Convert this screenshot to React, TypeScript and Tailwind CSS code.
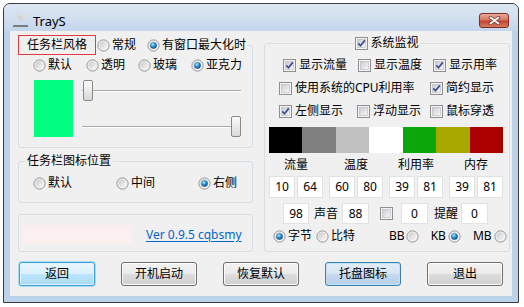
import React, { useId } from "react";

function Radio({ checked = false }: { checked?: boolean }) {
  const id = useId().replace(/[^a-zA-Z0-9]/g, "");
  return (
    <svg width="13" height="13" viewBox="0 0 13 13" className="shrink-0 block">
      <defs>
        <linearGradient id={`ri${id}`} x1="0" y1="0" x2="1" y2="1">
          <stop offset="0" stopColor="#c8c8c8" />
          <stop offset="1" stopColor="#fbfbfb" />
        </linearGradient>
        <radialGradient id={`rd${id}`} cx="0.4" cy="0.35" r="0.7">
          <stop offset="0" stopColor="#b9ecff" />
          <stop offset="0.45" stopColor="#2c92d5" />
          <stop offset="1" stopColor="#0c3f78" />
        </radialGradient>
      </defs>
      <circle cx="6.5" cy="6.5" r="5.6" fill="#f6f6f6" stroke="#929292" strokeWidth="1" />
      <circle cx="6.5" cy="6.5" r="4.2" fill={`url(#ri${id})`} />
      {checked && <circle cx="6.5" cy="6.5" r="3.3" fill={`url(#rd${id})`} />}
    </svg>
  );
}

function Check({ checked = false }: { checked?: boolean }) {
  const id = useId().replace(/[^a-zA-Z0-9]/g, "");
  return (
    <svg width="13" height="13" viewBox="0 0 13 13" className="shrink-0 block">
      <defs>
        <linearGradient id={`cg${id}`} x1="0" y1="0" x2="1" y2="1">
          <stop offset="0" stopColor="#c7cbd1" />
          <stop offset="1" stopColor="#f8f8f8" />
        </linearGradient>
      </defs>
      <rect x="0.5" y="0.5" width="12" height="12" fill="#f4f4f4" stroke="#8f8f8f" />
      <rect x="2.5" y="2.5" width="8" height="8" fill={`url(#cg${id})`} stroke="#b4b8be" strokeWidth="0.6" />
      {checked && (
        <path d="M3.3 6.4 L5.5 8.8 L9.8 3.4" fill="none" stroke="#3d4f94" strokeWidth="1.7" strokeLinejoin="round" />
      )}
    </svg>
  );
}

function RadioItem({ label, checked, className = "" }: { label: string; checked?: boolean; className?: string }) {
  return (
    <div className={"flex items-center " + className}>
      <Radio checked={checked} />
      <span className="ml-[2px]">{label}</span>
    </div>
  );
}

function CheckItem({ label, checked, className = "" }: { label: string; checked?: boolean; className?: string }) {
  return (
    <div className={"flex items-center " + className}>
      <Check checked={checked} />
      <span className="ml-[3px]">{label}</span>
    </div>
  );
}

function Slider({ end = false }: { end?: boolean }) {
  return (
    <div className={"relative h-[21px] flex items-center " + (end ? "justify-end" : "justify-start")}>
      <div className="absolute left-0 right-0 top-[10px] h-[2px] bg-[linear-gradient(#a9a9a9_50%,#ffffff_50%)]" />
      <div className="relative w-[10px] h-[21px] rounded-[2px] border border-[#888888] bg-[linear-gradient(#fbfbfb,#d8d8d8)] ml-[1px]" />
    </div>
  );
}

function Box({ v, className = "w-[26px] h-[22px]" }: { v: string; className?: string }) {
  return (
    <div className={"bg-white border border-[#e2e2e2] flex items-center justify-center " + className}>{v}</div>
  );
}

const btnBase = "w-[76px] h-[24px] rounded-[3px] border flex items-center justify-center";
const btnNormal =
  "border-[#707070] bg-[linear-gradient(#f2f2f2,#ebebeb_50%,#dddddd_50%,#cfcfcf)] shadow-[inset_0_0_0_1px_#fbfbfb]";

export default function App() {
  const swatches = ["bg-[#000000]", "bg-[#808080]", "bg-[#c0c0c0]", "bg-[#ffffff]", "bg-[#0aa60a]", "bg-[#a8a800]", "bg-[#aa0000]"];
  return (
    <div className="w-[524px] h-[307px] bg-white font-['Noto_Sans','Noto_Sans_CJK_SC',sans-serif] text-[12px] leading-[16px] text-black overflow-hidden">
      <div className="ml-[3px] mt-[3px] w-[516px] h-[300px] border border-[#3a3a3a] rounded-t-[7px] flex flex-col bg-[#bcd1ea] overflow-hidden">
        {/* title bar */}
        <div className="h-[27px] shrink-0 flex items-start pt-[9px] pl-[8px] pr-[9px] bg-[linear-gradient(#dee7f2,#c4d6ec)]">
          <svg width="16" height="16" viewBox="0 0 16 16" className="block shrink-0">
            <path d="M5 1 L13 1 L13 8 L9 8 L5 4 Z" fill="#d4d4d4" />
            <path d="M6 2 L12 2 L12 7" fill="none" stroke="#e6e6e6" />
            <rect x="1" y="12" width="15" height="2" fill="#7d7d7d" />
          </svg>
          <span className="ml-[5px] text-[13px] leading-[16px] font-['Noto_Sans',sans-serif]">TrayS</span>
          <div className="ml-auto w-[30px] h-[15px] rounded-[3px] border border-[#7d2e24] bg-[linear-gradient(#eaa99c,#d7775f_45%,#c2452e_55%,#d97a62)] flex items-center justify-center">
            <svg width="13" height="9" viewBox="0 0 13 9" className="block">
              <path d="M2.5 1.5 L10.5 7.5 M10.5 1.5 L2.5 7.5" stroke="#6b2f26" strokeWidth="3.4" strokeLinecap="round" />
              <path d="M2.5 1.5 L10.5 7.5 M10.5 1.5 L2.5 7.5" stroke="#ffffff" strokeWidth="1.9" strokeLinecap="round" />
            </svg>
          </div>
        </div>

        {/* client */}
        <div className="mx-[6px] h-[265px] shrink-0 bg-[#f0f0f0] pt-[4px] pl-[8px]">
          <div className="flex items-start gap-[11px]">
            {/* left column */}
            <div className="w-[235px] flex flex-col">
              <fieldset className="border border-[#d5dfe5] rounded-[3px] pb-[10px]">
                <legend className="-ml-[1px] pr-[1px]">
                  <div className="flex items-center h-[20px]">
                    <div className="h-[20px] w-[78px] border border-[#e23a3e] pl-[8px] flex items-center">任务栏风格</div>
                    <RadioItem className="ml-[1px]" label="常规" />
                    <RadioItem className="ml-[11px]" label="有窗口最大化时" checked />
                  </div>
                </legend>
                <div className="flex items-center mt-[2px] pl-[14px] h-[16px]">
                  <RadioItem className="w-[53px]" label="默认" />
                  <RadioItem className="w-[52px]" label="透明" />
                  <RadioItem className="w-[53px]" label="玻璃" />
                  <RadioItem label="亚克力" checked />
                </div>
                <div className="flex mt-[7px] pl-[15px]">
                  <div className="w-[39px] h-[57px] bg-[#00ff80]" />
                  <div className="ml-[9px] w-[159px] h-[57px] flex flex-col justify-between">
                    <Slider />
                    <Slider end />
                  </div>
                </div>
              </fieldset>

              <fieldset className="mt-[5px] border border-[#d5dfe5] rounded-[3px] pb-[11px]">
                <legend className="ml-[6px] px-[2px] leading-[16px]">任务栏图标位置</legend>
                <div className="flex items-center mt-[6px] pl-[14px] h-[16px]">
                  <RadioItem className="w-[83px]" label="默认" />
                  <RadioItem className="w-[82px]" label="中间" />
                  <RadioItem label="右侧" checked />
                </div>
              </fieldset>

              <div className="mt-[11px] border border-[#d5dfe5] rounded-[3px] pt-[10px] pl-[3px] pb-[7px] flex items-center">
                <div className="w-[110px] h-[19px] bg-[#fcefef]" />
                <span className="ml-[14px] text-[#0066cc] underline underline-offset-[2px] font-['Noto_Sans',sans-serif]">Ver 0.9.5 cqbsmy</span>
              </div>
            </div>

            {/* right group */}
            <fieldset className="w-[246px] border border-[#d5dfe5] rounded-[3px] pb-[7px]">
              <legend className="mx-auto px-[2px]">
                <div className="flex items-center h-[16px]">
                  <Check checked />
                  <span className="ml-[2px]">系统监视</span>
                </div>
              </legend>
              <div className="mt-[6px] flex flex-col gap-[7px]">
                <div className="flex h-[16px] items-center pl-[18px]">
                  <CheckItem className="w-[75px]" label="显示流量" checked />
                  <CheckItem className="w-[75px]" label="显示温度" />
                  <CheckItem label="显示用率" checked />
                </div>
                <div className="flex h-[16px] items-center pl-[14px]">
                  <CheckItem className="w-[151px]" label="使用系统的CPU利用率" />
                  <CheckItem label="简约显示" checked />
                </div>
                <div className="flex h-[16px] items-center pl-[14px]">
                  <CheckItem className="w-[78px]" label="左侧显示" checked />
                  <CheckItem className="w-[73px]" label="浮动显示" />
                  <CheckItem label="鼠标穿透" />
                </div>
              </div>

              <div className="mt-[8px] ml-[4px] w-[234px] h-[26px] flex">
                {swatches.map((c) => (
                  <div key={c} className={"flex-1 " + c} />
                ))}
              </div>

              <div className="mt-[4px] ml-[4px] w-[234px] h-[16px] grid grid-cols-4 gap-x-[6px] text-center">
                <span>流量</span>
                <span>温度</span>
                <span>利用率</span>
                <span>内存</span>
              </div>

              <div className="mt-[3px] ml-[4px] w-[234px] grid grid-cols-4 gap-x-[6px]">
                {[["10", "64"], ["60", "80"], ["39", "81"], ["39", "81"]].map((p, i) => (
                  <div key={i} className="flex gap-[2px]">
                    <Box v={p[0]} />
                    <Box v={p[1]} />
                  </div>
                ))}
              </div>

              <div className="mt-[5px] h-[21px] flex items-center pl-[18px]">
                <Box v="98" className="w-[26px] h-[21px]" />
                <span className="ml-[5px]">声音</span>
                <Box v="88" className="ml-[4px] w-[27px] h-[21px]" />
                <div className="ml-[11px]">
                  <Check />
                </div>
                <Box v="0" className="ml-[8px] w-[27px] h-[21px]" />
                <span className="ml-[6px]">提醒</span>
                <Box v="0" className="ml-[3px] w-[27px] h-[21px]" />
              </div>

              <div className="mt-[4px] h-[16px] flex items-center pl-[8px]">
                <RadioItem label="字节" checked />
                <RadioItem className="ml-[4px]" label="比特" />
                <span className="ml-[34px] font-['Noto_Sans',sans-serif]">BB</span>
                <div className="ml-[1px]"><Radio /></div>
                <span className="ml-[12px] font-['Noto_Sans',sans-serif]">KB</span>
                <div className="ml-[2px]"><Radio checked /></div>
                <span className="ml-[12px] font-['Noto_Sans',sans-serif]">MB</span>
                <div className="ml-[2px]"><Radio /></div>
              </div>
            </fieldset>
          </div>

          {/* buttons */}
          <div className="mt-[10px] pl-[1px] flex gap-[26px]">
            <div className={btnBase + " border-[#3ca0d8] bg-[linear-gradient(#eaf6fd,#d9f0fc_50%,#bee6fd_50%,#a7d9f5)] shadow-[inset_0_0_0_1px_#e2f4fd,0_0_0_1px_#a6dcf5]"}>返回</div>
            <div className={btnBase + " " + btnNormal}>开机启动</div>
            <div className={btnBase + " " + btnNormal}>恢复默认</div>
            <div className={btnBase + " border-[#3c7fb1] bg-[linear-gradient(#e3edf7,#d6e4f2_50%,#c5d9ed_50%,#b9d0e8)] shadow-[inset_0_0_0_1px_#bfe0f5]"}>托盘图标</div>
            <div className={btnBase + " " + btnNormal}>退出</div>
          </div>
        </div>
      </div>
    </div>
  );
}
